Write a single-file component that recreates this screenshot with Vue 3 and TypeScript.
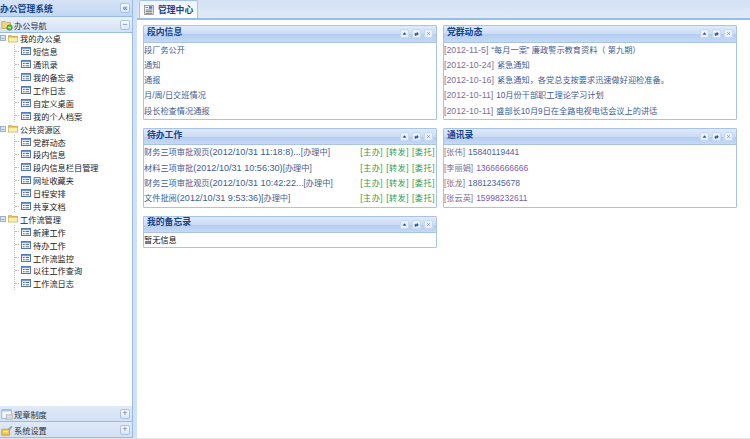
<script setup lang="ts">
type TreeGroup = { name: string; items: string[] };

const tree: TreeGroup[] = [
  { name: "我的办公桌", items: ["短信息", "通讯录", "我的备忘录", "工作日志", "自定义桌面", "我的个人档案"] },
  { name: "公共资源区", items: ["党群动态", "段内信息", "段内信息栏目管理", "网址收藏夹", "日程安排", "共享文档"] },
  { name: "工作流管理", items: ["新建工作", "待办工作", "工作流监控", "以往工作查询", "工作流日志"] },
];

const duanNei = ["段厂务公开", "通知", "通报", "月/周/日交班情况", "段长检查情况通报"];

const dangQun = [
  { date: "[2012-11-5]", text: "“每月一案” 廉政警示教育资料（ 第九期）" },
  { date: "[2012-10-24]", text: "紧急通知" },
  { date: "[2012-10-16]", text: "紧急通知，各党总支按要求迅速做好迎检准备。" },
  { date: "[2012-10-11]", text: "10月份干部职工理论学习计划" },
  { date: "[2012-10-11]", text: "盛部长10月9日在全路电视电话会议上的讲话" },
];

const todos = [
  { name: "财务三项审批观页", time: "(2012/10/31 11:18:8)...", state: "[办理中]" },
  { name: "材料三项审批", time: "(2012/10/31 10:56:30)", state: "[办理中]" },
  { name: "财务三项审批观页", time: "(2012/10/31 10:42:22...", state: "[办理中]" },
  { name: "文件批阅", time: "(2012/10/31 9:53:36)", state: "[办理中]" },
];

const actions = ["[主办]", "[转发]", "[委托]"];

const contacts = [
  { name: "[张伟]", phone: "15840119441", visited: false },
  { name: "[李丽娟]", phone: "13666666666", visited: true },
  { name: "[张龙]", phone: "18812345678", visited: false },
  { name: "[张云英]", phone: "15998232611", visited: true },
];

// collapse, refresh and close buttons in each panel header
const panelTools = [
  "M1.500 5.500L4 2.500l2.500 3z",
  "M1.500 3.500h3.500V2l2 2-2 2V4.500H1.500zM6.500 5.500H3V4L1 6l2 2V6.500h3.500z",
  "M1.500 1.500l5 5M6.500 1.500l-5 5",
];
</script>

<template>
  <div class="page">
    <aside class="side">
      <div class="side-title">
        <span>办公管理系统</span>
        <span class="tool-btn tool-btn--big">«</span>
      </div>
      <div class="acc-head">
        <svg class="acc-icon" viewBox="0 0 14 14">
          <path d="M1 3h4l1 1h5v7H1z" fill="#f2d77c" stroke="#b59a3e" stroke-width=".8" />
          <circle cx="10" cy="10" r="3.200" fill="#4fae3c" stroke="#2e7d22" stroke-width=".6" />
          <path d="M8 10h3M10 8.600l1.500 1.400-1.500 1.400" fill="none" stroke="#fff" stroke-width=".9" />
        </svg>
        <span class="acc-label">办公导航</span>
        <span class="tool-btn">−</span>
      </div>
      <div class="tree">
        <div v-for="group in tree" :key="group.name" class="tree-group">
          <div class="tree-row tree-row--root">
            <span class="expander">−</span>
            <svg class="folder" viewBox="0 0 14 11">
              <path d="M.5 2.500V1.500h4.500l1 1h7.500v8H.5z" fill="#e8c04f" stroke="#a98a2d" stroke-width=".8" />
              <path d="M1 4.500h12v5.500H1z" fill="#fdeea8" />
            </svg>
            <span>{{ group.name }}</span>
          </div>
          <div class="tree-items">
            <div v-for="item in group.items" :key="item" class="tree-row tree-row--leaf">
              <span class="dash"></span>
              <svg class="leaf-icon" viewBox="0 0 11 9">
                <rect x=".5" y=".5" width="10" height="8" fill="#fff" stroke="#3c66b0" />
                <rect x="1" y="1" width="9" height="1.500" fill="#6f9be0" />
                <path d="M2 4h2M2 6.500h2M5 4h4M5 6.500h4" stroke="#33435f" stroke-width=".9" />
              </svg>
              <span>{{ item }}</span>
            </div>
          </div>
        </div>
      </div>
      <div class="acc-head acc-head--closed">
        <svg class="acc-icon" viewBox="0 0 14 14">
          <rect x="1" y="2" width="11" height="10" fill="#f4f7fb" stroke="#8a9db8" stroke-width=".8" />
          <rect x="1" y="2" width="11" height="2" fill="#a9c3e6" />
          <rect x="6" y="8" width="7" height="5" fill="#dcdcdc" stroke="#999" stroke-width=".6" />
        </svg>
        <span class="acc-label">规章制度</span>
        <span class="tool-btn">+</span>
      </div>
      <div class="acc-head acc-head--closed">
        <svg class="acc-icon" viewBox="0 0 14 14">
          <path d="M1 6h9v7H1z" fill="#f2c84f" stroke="#c08b1e" stroke-width=".8" />
          <path d="M3 9h5" stroke="#fff" stroke-width="1" />
          <path d="M8 6l4-4 1.500 1.500-4 4z" fill="#9aa3ad" />
        </svg>
        <span class="acc-label">系统设置</span>
        <span class="tool-btn">+</span>
      </div>
    </aside>

    <div class="splitter"></div>

    <main class="main">
      <div class="tabs">
        <div class="tab">
          <svg class="tab-icon" viewBox="0 0 12 12">
            <rect x=".5" y=".5" width="11" height="11" fill="#f4f4f4" stroke="#777" stroke-width=".8" />
            <path d="M2 3h3M2 6h8M2 8h8M2 10h8" stroke="#555" stroke-width=".9" />
            <rect x="6" y="1.500" width="4" height="3" fill="#4a76b8" />
          </svg>
          <span>管理中心</span>
        </div>
      </div>

      <div class="board">
        <div class="col">
          <section class="panel">
            <header class="panel-head">
              <span class="panel-title">段内信息</span>
              <span class="panel-tools">
                <svg v-for="d in panelTools" :key="d" class="p-btn" viewBox="0 0 8 8"><path :d="d" /></svg>
              </span>
            </header>
            <div class="panel-body">
              <div v-for="row in duanNei" :key="row" class="row">{{ row }}</div>
            </div>
          </section>

          <section class="panel">
            <header class="panel-head">
              <span class="panel-title">待办工作</span>
              <span class="panel-tools">
                <svg v-for="d in panelTools" :key="d" class="p-btn" viewBox="0 0 8 8"><path :d="d" /></svg>
              </span>
            </header>
            <div class="panel-body">
              <div v-for="todo in todos" :key="todo.time" class="row row--todo">
                <span>{{ todo.name }}<span class="latin">{{ todo.time }}</span>{{ todo.state }}</span>
                <span class="actions">
                  <span v-for="a in actions" :key="a">{{ a }}</span>
                </span>
              </div>
            </div>
          </section>

          <section class="panel">
            <header class="panel-head">
              <span class="panel-title">我的备忘录</span>
              <span class="panel-tools">
                <svg v-for="d in panelTools" :key="d" class="p-btn" viewBox="0 0 8 8"><path :d="d" /></svg>
              </span>
            </header>
            <div class="panel-body">
              <div class="row row--dark">暂无信息</div>
            </div>
          </section>
        </div>

        <div class="col">
          <section class="panel">
            <header class="panel-head">
              <span class="panel-title">党群动态</span>
              <span class="panel-tools">
                <svg v-for="d in panelTools" :key="d" class="p-btn" viewBox="0 0 8 8"><path :d="d" /></svg>
              </span>
            </header>
            <div class="panel-body">
              <div v-for="row in dangQun" :key="row.text" class="row">
                <span class="muted date">{{ row.date }}</span>
                <span>{{ row.text }}</span>
              </div>
            </div>
          </section>

          <section class="panel">
            <header class="panel-head">
              <span class="panel-title">通讯录</span>
              <span class="panel-tools">
                <svg v-for="d in panelTools" :key="d" class="p-btn" viewBox="0 0 8 8"><path :d="d" /></svg>
              </span>
            </header>
            <div class="panel-body">
              <div v-for="c in contacts" :key="c.phone" class="row">
                <span class="muted">{{ c.name }}</span>
                <span class="phone" :class="{ visited: c.visited }">{{ c.phone }}</span>
              </div>
            </div>
          </section>
        </div>
      </div>
    </main>
  </div>
</template>

<style scoped>
.page {
  display: flex;
  width: 750px;
  height: 438px;
  border-bottom: 1px solid #e4e4e4;
  font-family: "Liberation Sans", "Noto Sans CJK SC", sans-serif;
  font-size: 8.2px;
  color: #222;
  background: #fff;
  overflow: hidden;
}
.side {
  display: flex;
  flex-direction: column;
  box-sizing: border-box;
  width: 133px;
  flex: none;
  border-right: 1px solid #99bbe8;
}
.side-title {
  display: flex;
  align-items: center;
  justify-content: space-between;
  box-sizing: border-box;
  height: 17px;
  padding-right: 2px;
  font-size: 8.8px;
  font-weight: bold;
  color: #15428b;
  background: linear-gradient(#d6e3f6, #c3d7f2);
  border-bottom: 1px solid #99bbe8;
}
.acc-head {
  display: flex;
  align-items: center;
  box-sizing: border-box;
  height: 16px;
  padding: 0 2px 0 1px;
  gap: 1px;
  color: #333;
  background: linear-gradient(#eaf1fb, #d4e2f6);
  border-bottom: 1px solid #99bbe8;
}
.acc-head--closed {
  background: linear-gradient(#dfe9f8, #d3e1f5);
}
.acc-icon {
  width: 12px;
  height: 12px;
  flex: none;
}
.acc-label {
  flex: 1;
}
.tool-btn {
  display: flex;
  align-items: center;
  justify-content: center;
  box-sizing: border-box;
  width: 10px;
  height: 10px;
  font-size: 9px;
  line-height: 1;
  color: #5b7fb8;
  background: linear-gradient(#fbfdff, #d9e6f7);
  border: 1px solid #a9c3e6;
  border-radius: 2px;
}
.tree {
  flex: 1;
  margin-top: -1px;
  overflow: hidden;
}
.tree-row {
  display: flex;
  align-items: center;
  height: 12.9px;
  white-space: nowrap;
  color: #222;
}
.tree-row--root {
  gap: 2px;
}
.expander {
  display: flex;
  align-items: center;
  justify-content: center;
  box-sizing: border-box;
  width: 6px;
  height: 6px;
  font-size: 6px;
  line-height: 1;
  color: #456;
  background: #dbe6f4;
  border: 1px solid #9fb2cb;
}
.folder {
  width: 10px;
  height: 9px;
  flex: none;
}
.tree-items {
  margin-left: 14px;
  border-left: 1px dotted #bbb;
}
.tree-row--leaf {
  gap: 2px;
}
.dash {
  width: 4px;
  border-top: 1px dotted #bbb;
  flex: none;
}
.leaf-icon {
  width: 10px;
  height: 8px;
  flex: none;
}
.splitter {
  width: 4px;
  flex: none;
  background: #d0e0f5;
}
.main {
  flex: 1;
  min-width: 0;
  display: flex;
  flex-direction: column;
}
.tabs {
  box-sizing: border-box;
  height: 20px;
  padding-left: 2px;
  background: linear-gradient(#d4e2f5, #e0eaf8);
  border-bottom: 2px solid #99bbe8;
}
.tab {
  display: flex;
  align-items: center;
  gap: 4px;
  box-sizing: border-box;
  width: 59px;
  height: 18px;
  padding-left: 4px;
  font-size: 8.8px;
  font-weight: bold;
  color: #15428b;
  background: linear-gradient(#eef4fc, #fff);
  border: 1px solid #a9c3e6;
  border-width: 1px 1px 0;
  border-radius: 2px 2px 0 0;
}
.tab-icon {
  width: 10px;
  height: 10px;
  flex: none;
}
.board {
  display: flex;
  gap: 6px;
  padding: 5px 0 0 6px;
}
.col {
  display: flex;
  flex-direction: column;
  gap: 8px;
  width: 294px;
}
.panel {
  border: 1px solid #a9c3e6;
  border-radius: 1px;
}
.panel-head {
  display: flex;
  align-items: center;
  justify-content: space-between;
  box-sizing: border-box;
  height: 16.500px;
  padding: 0 3px;
  font-size: 8.8px;
  font-weight: bold;
  color: #15428b;
  background: linear-gradient(#e0eafa 0%, #cbdcf4 50%, #b3cdf0 52%, #c6d9f5 100%);
  border-bottom: 1px solid #a9c3e6;
}
.panel-title {
  line-height: 13px;
  margin-bottom: 3px;
}
.panel-tools {
  display: flex;
  gap: 3px;
}
.p-btn {
  box-sizing: border-box;
  width: 9px;
  height: 9px;
  padding: 1px;
  fill: #2a4f9a;
  stroke: #2a4f9a;
  stroke-width: .6;
  background: #eaf1fb;
  border: 1px solid #c6d9f2;
  border-radius: 2px;
}
.panel-body {
  color: #3d5c94;
}
.row {
  display: flex;
  align-items: baseline;
  gap: 3px;
  height: 15.3px;
  line-height: 15.500px;
  white-space: nowrap;
}
.row--todo {
  justify-content: space-between;
  padding-right: 1px;
}
.row--dark {
  height: 14px;
  color: #111;
}
.latin {
  font-size: 9.1px;
}
.date {
  font-size: 8.8px;
}
.phone {
  font-size: 8.5px;
  color: #4a62a0;
}
.actions {
  display: flex;
  gap: 3px;
  letter-spacing: .5px;
  color: #1f9d55;
}
.muted {
  color: #7f6f95;
}
.visited {
  color: #7a5bb0;
}
</style>
